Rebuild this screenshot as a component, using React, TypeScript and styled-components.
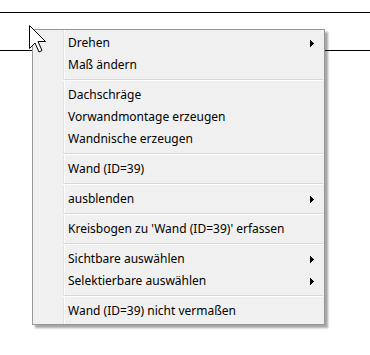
import React from "react";
import styled, { createGlobalStyle } from "styled-components";

const Global = createGlobalStyle`
  html, body { margin: 0; padding: 0; background: #fff; }
  body { width: 370px; height: 355px; overflow: hidden; }
`;

const Page = styled.div`
  position: relative;
  width: 370px;
  height: 355px;
  background: #fff;
`;

const Drawing = styled.svg`
  display: block;
  width: 370px;
  height: 355px;
`;

const Menu = styled.div`
  position: absolute;
  left: 32px;
  top: 29px;
  width: 291px;
  padding: 2px;
  border: 1px solid #979797;
  box-sizing: content-box;
  width: 287px;
  background: linear-gradient(
    to right,
    #f0f0f0 30px,
    #e2e3e3 30px,
    #e2e3e3 31px,
    #ffffff 31px,
    #ffffff 32px,
    #f0f0f0 32px
  );
  box-shadow: 3px 3px 2px rgba(0, 0, 0, 0.35);
  font-family: "Segoe UI", "Noto Sans", sans-serif;
  font-size: 12px;
  color: #000;
  display: flex;
  flex-direction: column;
`;

const Item = styled.div`
  height: 22px;
  display: flex;
  align-items: center;
  padding-left: 33px;
  padding-right: 8px;
  line-height: 22px;
  white-space: nowrap;
`;

const Label = styled.span`
  flex: 1;
`;

const Separator = styled.div`
  height: 8px;
  margin-left: 28px;
  margin-right: -1px;
  display: flex;
  flex-direction: column;
  justify-content: center;
  &::before {
    content: "";
    display: block;
    height: 1px;
    background: #d7d7d7;
  }
  &::after {
    content: "";
    display: block;
    height: 1px;
    background: #ffffff;
  }
`;

const Cursor = styled.svg`
  position: absolute;
  left: 28px;
  top: 24px;
`;

const Arrow = () => (
  <svg width="4" height="7" viewBox="0 0 4 7" shapeRendering="crispEdges">
    <rect x="0" y="0" width="1" height="7" fill="#000" />
    <rect x="1" y="1" width="1" height="5" fill="#000" />
    <rect x="2" y="2" width="1" height="3" fill="#000" />
    <rect x="3" y="3" width="1" height="1" fill="#000" />
  </svg>
);

type Entry = { label: string; sub?: boolean } | "sep";

const entries: Entry[] = [
  { label: "Drehen", sub: true },
  { label: "Maß ändern" },
  "sep",
  { label: "Dachschräge" },
  { label: "Vorwandmontage erzeugen" },
  { label: "Wandnische erzeugen" },
  "sep",
  { label: "Wand (ID=39)" },
  "sep",
  { label: "ausblenden", sub: true },
  "sep",
  { label: "Kreisbogen zu 'Wand (ID=39)' erfassen" },
  "sep",
  { label: "Sichtbare auswählen", sub: true },
  { label: "Selektierbare auswählen", sub: true },
  "sep",
  { label: "Wand (ID=39) nicht vermaßen" },
];

export default function App() {
  return (
    <Page>
      <Global />
      <Drawing viewBox="0 0 370 355" shapeRendering="crispEdges">
        <line x1="0" y1="12.5" x2="370" y2="12.5" stroke="#000" strokeWidth="1" />
        <line x1="0" y1="50.5" x2="370" y2="50.5" stroke="#000" strokeWidth="1" />
      </Drawing>
      <Menu>
        {entries.map((e, i) =>
          e === "sep" ? (
            <Separator key={i} />
          ) : (
            <Item key={i}>
              <Label>{e.label}</Label>
              {e.sub && <Arrow />}
            </Item>
          )
        )}
      </Menu>
      <Cursor width="20" height="32" viewBox="0 0 20 32">
        <polygon
          points="1.5,1.5 1.5,24.5 7,19 11,28 14,26.5 10,17.5 17.5,17.5"
          fill="#fff"
          stroke="#000"
          strokeWidth="1"
          strokeLinejoin="miter"
        />
      </Cursor>
    </Page>
  );
}
